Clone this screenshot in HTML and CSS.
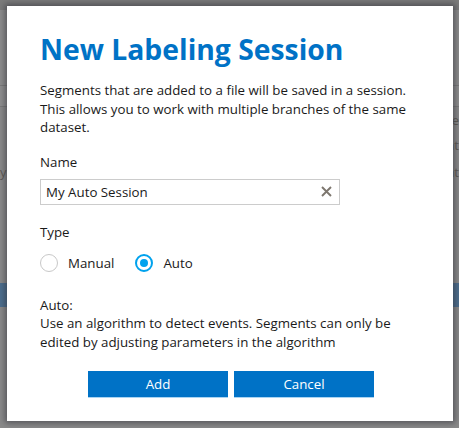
FILE: index.html
```html
<!DOCTYPE html>
<html>
<head>
<meta charset="utf-8">
<link rel="stylesheet" href="styles.css">
</head>
<body>
<div class="page">
  <div class="topbar"></div>
  <div class="band1"></div>
  <div class="row-line"></div>
  <div class="row-gap"></div>
  <div class="row-line"></div>
  <div class="bg-rows">
    <div class="bg-row r1"><span class="l"></span><span class="r">ne</span></div>
    <div class="bg-row r2"><span class="l"></span><span class="r">nt</span></div>
    <div class="bg-row r3"><span class="l">y</span><span class="r">nt</span></div>
  </div>
  <div class="blue-band"></div>
</div>

<div class="dialog">
  <h1 class="title">New Labeling Session</h1>
  <p class="intro">Segments that are added to a file will be saved in a session. This allows you to work with multiple branches of the same dataset.</p>

  <label class="field-label">Name</label>
  <div class="input">
    <span class="input-text">My Auto Session</span>
    <svg class="clear" width="11" height="11" viewBox="0 0 11 11"><path d="M1 1 L10 10 M10 1 L1 10" stroke="#7d766e" stroke-width="1.9" fill="none"/></svg>
  </div>

  <label class="field-label type-label">Type</label>
  <div class="radios">
    <div class="radio"><span class="circle"></span><span>Manual</span></div>
    <div class="radio"><span class="circle checked"></span><span>Auto</span></div>
  </div>

  <div class="desc">
    <div>Auto:</div>
    <div>Use an algorithm to detect events. Segments can only be edited by adjusting parameters in the algorithm</div>
  </div>

  <div class="buttons">
    <button class="btn">Add</button>
    <button class="btn">Cancel</button>
  </div>
</div>
</body>
</html>
```

FILE: styles.css
```css
html, body {
  margin: 0;
  padding: 0;
}
body {
  width: 459px;
  height: 428px;
  overflow: hidden;
  background: #8a8a8a;
  font-family: "Open Sans", "Noto Sans", sans-serif;
  position: relative;
}
.page {
  display: flex;
  flex-direction: column;
}
.topbar {
  height: 10px;
  background: #7b7b7b;
}
.band1 {
  height: 75px;
  background: #8c8c8c;
}
.row-line {
  height: 1px;
  background: #7a7a7a;
}
.row-gap {
  height: 20px;
  background: #8e8e8e;
}
.bg-rows {
  display: flex;
  flex-direction: column;
  height: 176px;
  color: #5e5a55;
  font-size: 13px;
  overflow: hidden;
}
.bg-row {
  display: flex;
  justify-content: space-between;
  align-items: center;
}
.bg-row.r1 { height: 26px; }
.bg-row.r2 { height: 24px; }
.bg-row.r3 { height: 30px; }
.blue-band {
  height: 24px;
  background: #4d6e8d;
}

.dialog {
  position: absolute;
  left: 7px;
  top: 6px;
  width: 446px;
  height: 415px;
  box-sizing: border-box;
  background: #fff;
  box-shadow: 0 0 6px 2px rgba(40, 40, 50, 0.55);
  padding: 0 38px 0 33px;
  color: #1a1a1a;
  font-size: 13.3px;
}
.title {
  margin: 0;
  padding-top: 26px;
  font-size: 28.3px;
  line-height: 34px;
  font-weight: 700;
  color: #0072c6;
}
.intro {
  margin: 15px 0 0;
  line-height: 18.5px;
}
.field-label {
  display: block;
  margin-top: 16px;
  line-height: 18px;
}
.input {
  margin-top: 8px;
  width: 300px;
  height: 26px;
  box-sizing: border-box;
  border: 1.5px solid #cccccc;
  display: flex;
  align-items: center;
  justify-content: space-between;
  padding: 0 7px 0 5px;
}
.clear { display: block; }
.type-label {
  margin-top: 18px;
}
.radios {
  display: flex;
  gap: 21px;
  margin-top: 13px;
  height: 18px;
  align-items: center;
}
.radio {
  display: flex;
  align-items: center;
  gap: 10px;
}
.circle {
  width: 18px;
  height: 18px;
  box-sizing: border-box;
  border: 1px solid #c8c8c8;
  border-radius: 50%;
  position: relative;
}
.circle.checked {
  border: 2px solid #00a2ed;
}
.circle.checked::after {
  content: "";
  position: absolute;
  left: 3px;
  top: 3px;
  width: 8px;
  height: 8px;
  border-radius: 50%;
  background: #00a2ed;
}
.desc {
  margin-top: 24px;
  line-height: 18.5px;
}
.buttons {
  display: flex;
  justify-content: center;
  gap: 6px;
  margin-top: 20px;
  padding-left: 7px;
}
.btn {
  width: 140px;
  height: 27px;
  border: 0;
  border-bottom: 1px solid #aad4f2;
  background: #0072c6;
  color: #fff;
  font-family: inherit;
  font-size: 13.3px;
  padding: 0;
}
```
